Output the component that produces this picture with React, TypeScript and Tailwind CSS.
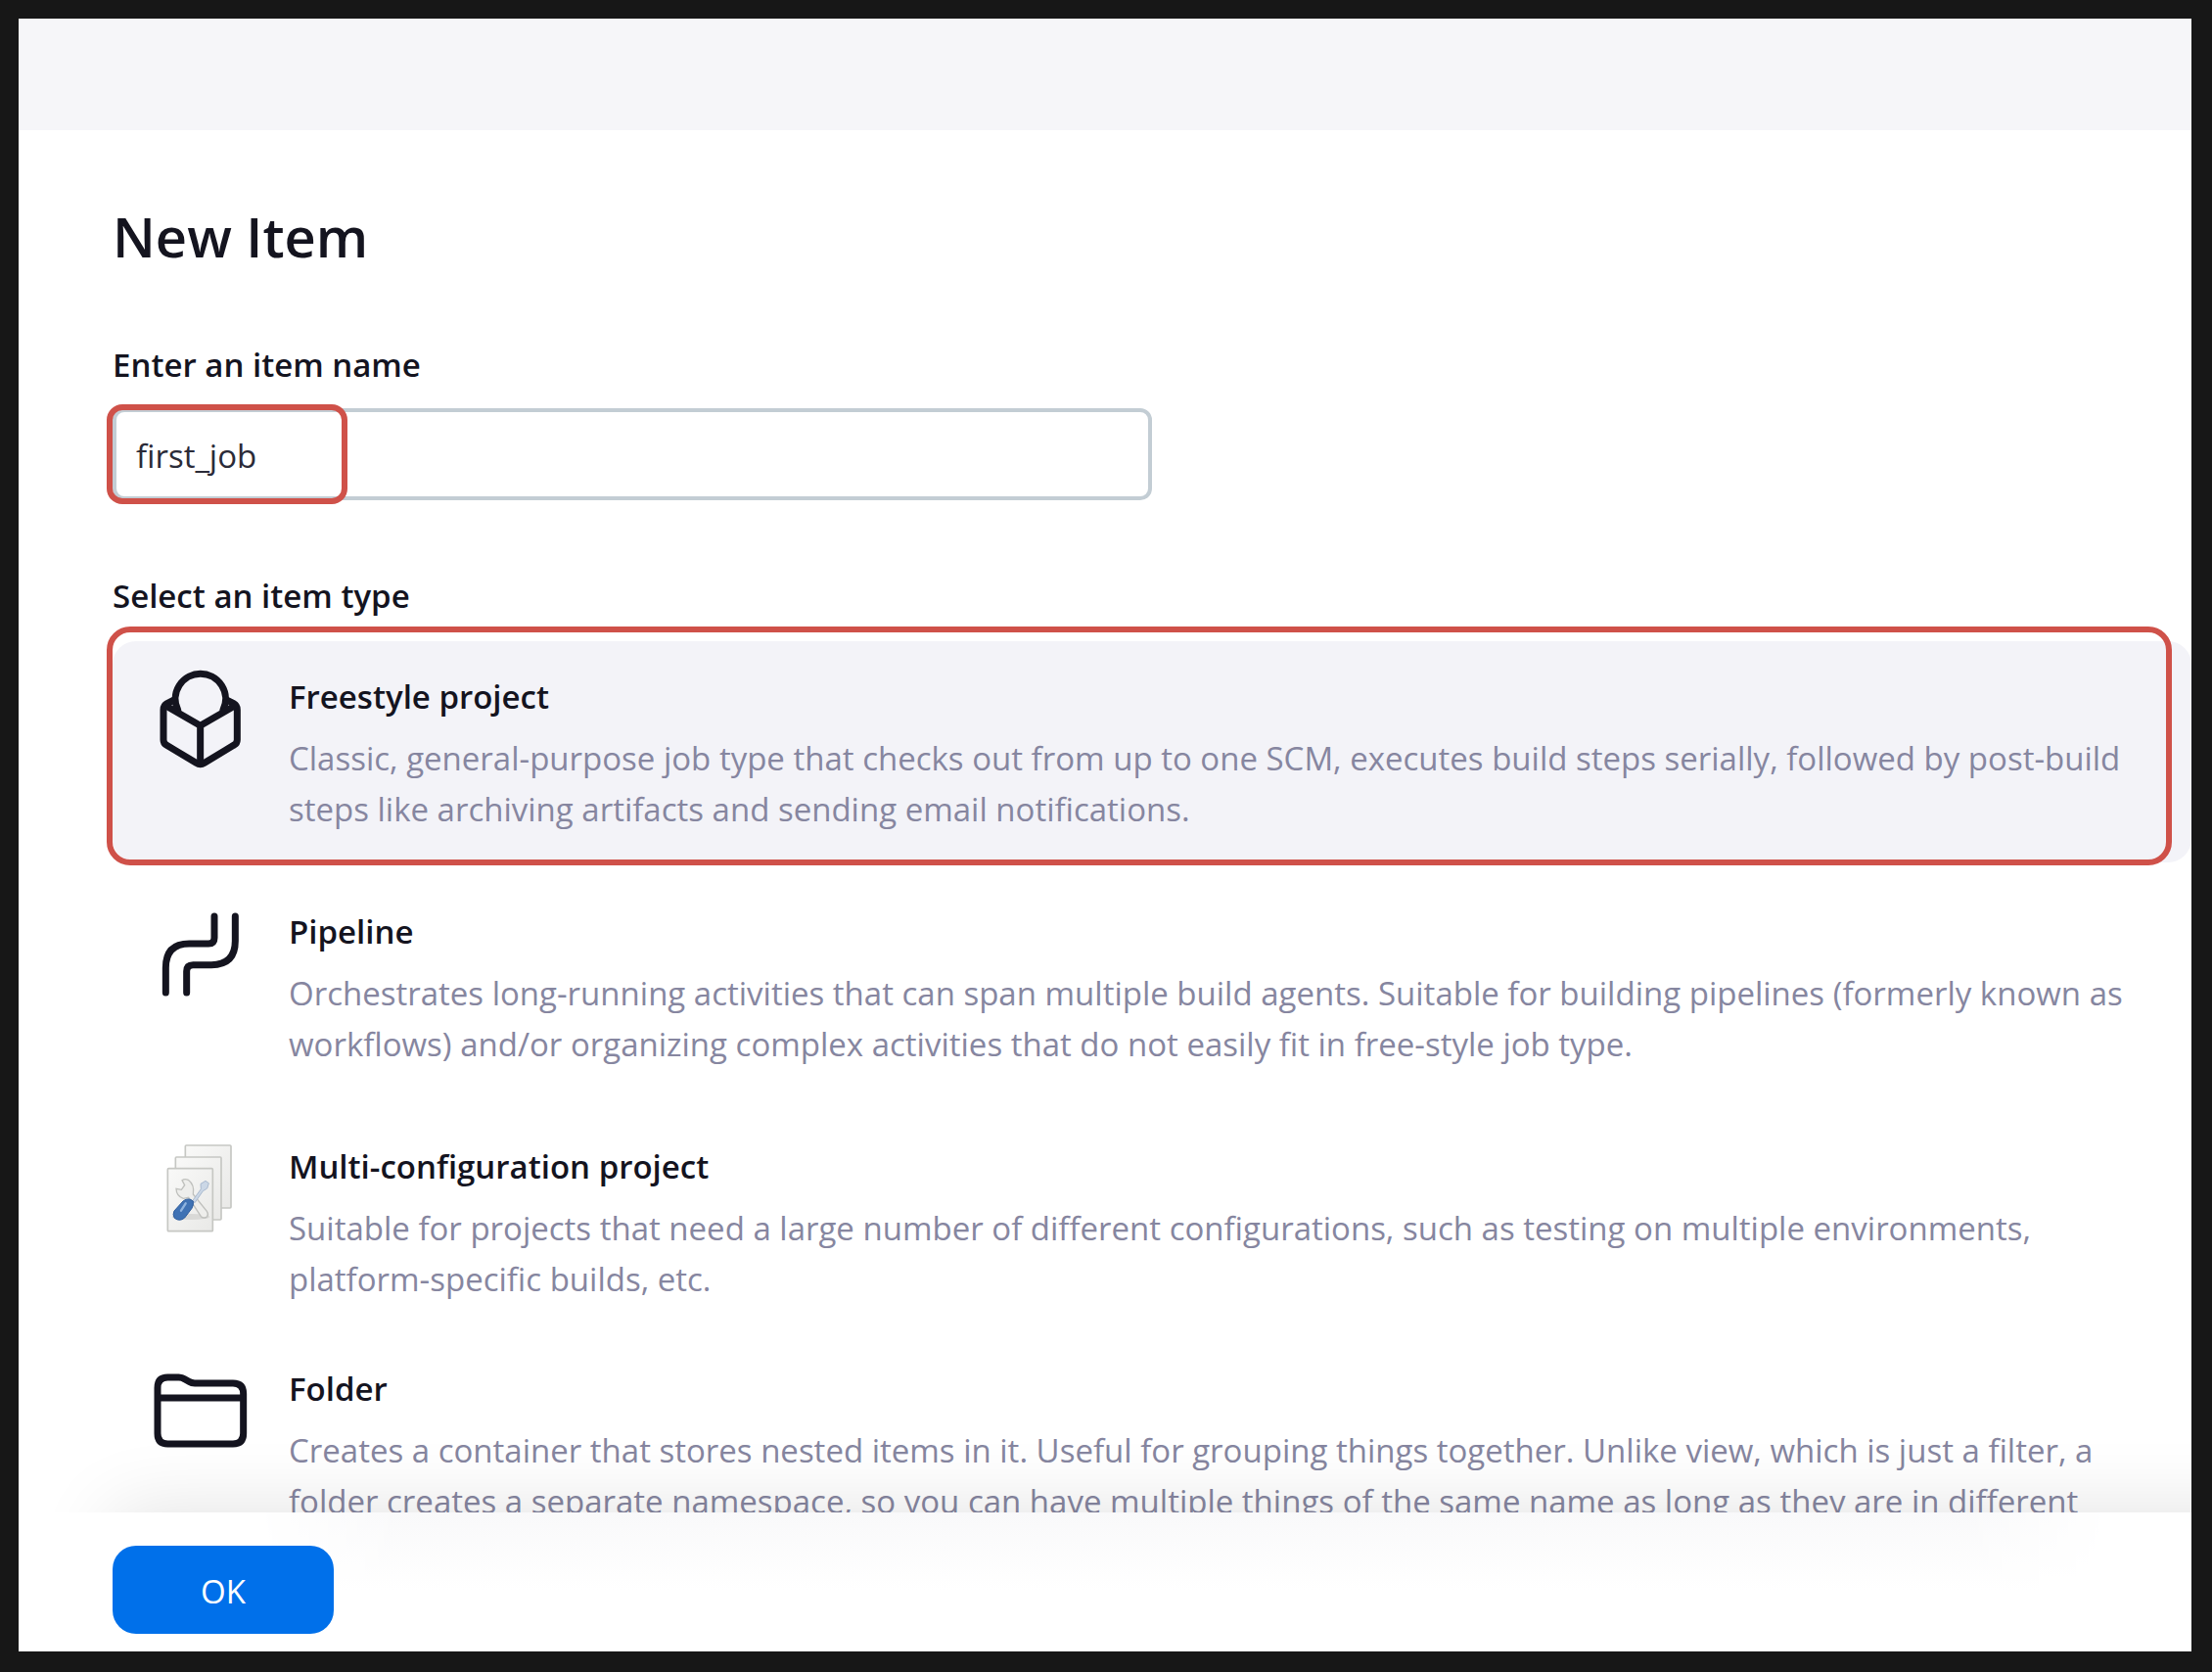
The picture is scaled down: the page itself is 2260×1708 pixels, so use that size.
import React, { useState } from "react";

function FreestyleIcon() {
  return (
    <svg viewBox="0 0 330 390" className="h-[130px] w-[110px]" fill="none" stroke="#14141f" strokeWidth="21" strokeLinecap="round" strokeLinejoin="round">
      <path d="M95 165A77 77 0 1 1 234 165" />
      <path d="M84 135L62 146Q51 152 51 165V257Q51 268 61 274L151 328Q164 336 177 328L266 274Q277 268 277 257V165Q277 152 266 146L245 135" />
      <path d="M60 154L164 214L268 154M164 214V325" />
    </svg>
  );
}

function PipelineIcon() {
  return (
    <svg viewBox="0 0 330 390" className="h-[130px] w-[110px]" fill="none" stroke="#14141f" strokeWidth="21" strokeLinecap="round">
      <path d="M207 78V144Q207 162 189 162H130Q58 162 58 236V312" />
      <path d="M271 78V154Q271 227 198 227H142Q122 227 122 247V312" />
    </svg>
  );
}

function MatrixIcon() {
  return (
    <svg viewBox="0 29 330 390" className="h-[130px] w-[110px]" fill="none">
      <defs>
        <linearGradient id="sheet" x1="0" y1="0" x2="1" y2="1">
          <stop offset="0" stopColor="#f9f9f8" />
          <stop offset="1" stopColor="#e9e9e7" />
        </linearGradient>
      </defs>
      <g fill="url(#sheet)" stroke="#c6c7c3" strokeWidth="5">
        <rect x="118" y="89" width="140" height="192" rx="3" />
        <rect x="88" y="125" width="140" height="192" rx="3" />
        <rect x="64" y="160" width="138" height="192" rx="3" />
      </g>
      <ellipse cx="135" cy="308" rx="58" ry="9" fill="#d9d9d7" />
      <path d="M108 196L116 211L106 225L90 222Q91 246 112 252L128 249L166 307Q176 315 185 307Q190 300 184 291L142 239Q147 210 127 195Q116 190 108 196Z" fill="#eeeeec" stroke="#bfc0bd" strokeWidth="4" />
      <path d="M140 259L166 223L165 207L180 198L190 205L185 221L172 229L147 265Z" fill="#cbd7e6" stroke="#a9b9ce" strokeWidth="3" />
      <path d="M112 259Q128 248 142 260Q144 272 138 282L116 311Q101 324 85 312Q78 301 84 290Z" fill="#3f72b4" stroke="#2d5c9c" strokeWidth="3" />
      <path d="M119 267L105 289" stroke="#8fb4df" strokeWidth="7" strokeLinecap="round" />
    </svg>
  );
}

function FolderIcon() {
  return (
    <svg viewBox="0 0 330 390" className="h-[130px] w-[110px]" fill="none" stroke="#14141f" strokeWidth="21" strokeLinejoin="round">
      <path d="M33 260V122Q33 90 64 90H98Q108 90 117 96L129 103Q137 108 147 108H264Q296 108 296 140V262Q296 294 264 294H64Q33 294 33 262Z" />
      <path d="M33 153H296" />
    </svg>
  );
}

const items = [
  {
    id: "freestyle",
    title: "Freestyle project",
    text: "Classic, general-purpose job type that checks out from up to one SCM, executes build steps serially, followed by post-build steps like archiving artifacts and sending email notifications.",
    Icon: FreestyleIcon,
  },
  {
    id: "pipeline",
    title: "Pipeline",
    text: "Orchestrates long-running activities that can span multiple build agents. Suitable for building pipelines (formerly known as workflows) and/or organizing complex activities that do not easily fit in free-style job type.",
    Icon: PipelineIcon,
  },
  {
    id: "matrix",
    title: "Multi-configuration project",
    text: "Suitable for projects that need a large number of different configurations, such as testing on multiple environments, platform-specific builds, etc.",
    Icon: MatrixIcon,
  },
  {
    id: "folder",
    title: "Folder",
    text: "Creates a container that stores nested items in it. Useful for grouping things together. Unlike view, which is just a filter, a folder creates a separate namespace, so you can have multiple things of the same name as long as they are in different",
    Icon: FolderIcon,
  },
];

export default function App() {
  const [name, setName] = useState("first_job");
  const [selected, setSelected] = useState("freestyle");

  return (
    <div className="h-screen bg-[#171717] pt-[19px] pr-[21px] pb-[21px] pl-[19px] font-['Open_Sans',sans-serif] text-[33px] leading-[52px] text-[#14141f]">
      <div className="flex h-full flex-col overflow-hidden bg-white">
        <header className="h-[114px] shrink-0 bg-[#f6f6f9]" />
        <main className="min-h-0 flex-1 overflow-hidden pt-[66px] pl-24">
          <h1 className="text-[56px] leading-[84px] font-semibold">New Item</h1>
          <div className="mt-16">
            <label htmlFor="item-name" className="block font-semibold">
              Enter an item name
            </label>
            <div className="relative mt-[18px] w-1/2">
              <input
                id="item-name"
                value={name}
                onChange={(e) => setName(e.target.value)}
                className="block h-[94px] w-full rounded-xl border-4 border-[#c3cdd4] bg-white px-5 pt-0.5 text-[#2b2b38] outline-none"
              />
              <div className="pointer-events-none absolute -top-1 -left-[6px] h-[102px] w-[246px] rounded-2xl border-[6px] border-[#cf5149]" />
            </div>
          </div>
          <fieldset className="mt-[72px]">
            <legend className="font-semibold">Select an item type</legend>
            <div className="relative mt-5 flex flex-col gap-[14px]">
              <div className="pointer-events-none absolute -top-[15px] right-5 -left-[6px] h-[244px] rounded-3xl border-[6px] border-[#cf5149]" />
              {items.map(({ id, title, text, Icon }) => (
                <label
                  key={id}
                  className={
                    selected === id
                      ? "flex h-[226px] cursor-pointer gap-[35px] rounded-3xl bg-[#f3f3f8] pt-[15px] pr-8 pl-[35px] last:-mt-[13px]"
                      : "flex h-[226px] cursor-pointer gap-[35px] rounded-3xl pt-[15px] pr-8 pl-[35px] last:-mt-[13px]"
                  }
                >
                  <input type="radio" name="type" value={id} checked={selected === id} onChange={() => setSelected(id)} className="sr-only" />
                  <span className="shrink-0">
                    <Icon />
                  </span>
                  <span className="pt-4">
                    <span className="block font-semibold">{title}</span>
                    <span className="mt-[11px] block text-[#8686a0]">{text}</span>
                  </span>
                </label>
              ))}
            </div>
          </fieldset>
        </main>
        <footer className="relative shrink-0">
          <div className="absolute inset-y-0 -right-24 left-24 shadow-[0_0_80px_rgba(0,0,0,0.12)]" />
          <div className="relative bg-white pt-[34px] pb-[18px] pl-24">
            <div className="absolute top-0 right-20 left-60 h-20 bg-linear-to-b from-[#f9f9fa] to-white [mask-image:linear-gradient(to_right,transparent,black_8%,black_92%,transparent)]" />
            <button type="button" className="relative block h-[90px] w-[226px] rounded-3xl bg-[#0070ea] pt-1 text-white">
              OK
            </button>
          </div>
        </footer>
      </div>
    </div>
  );
}
